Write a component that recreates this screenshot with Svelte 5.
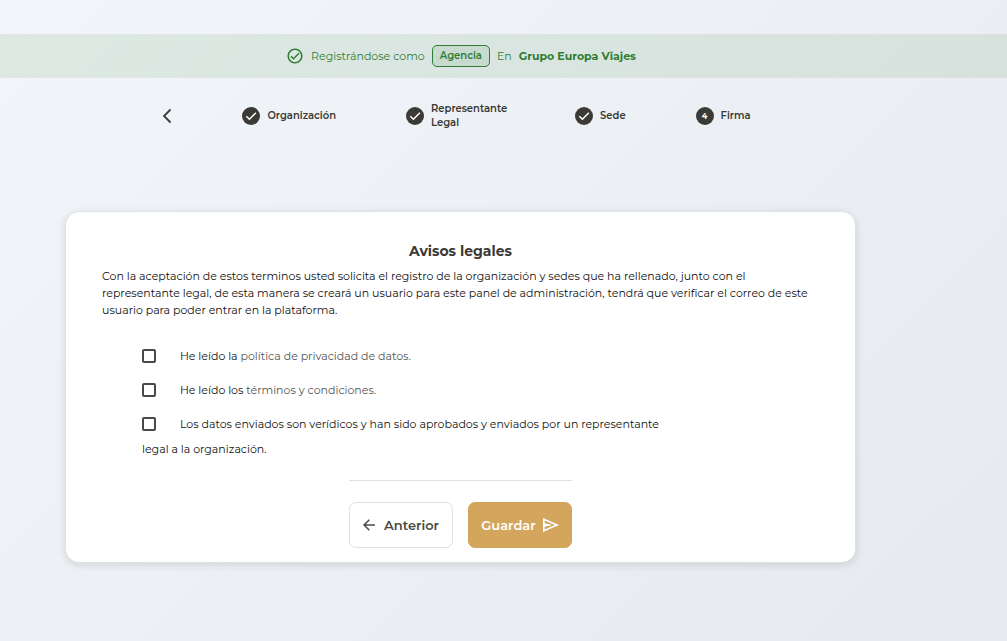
<script>
  const steps = [
    { id: 1, label: "Organización", done: true },
    { id: 2, label: "Representante Legal", done: true },
    { id: 3, label: "Sede", done: true },
    { id: 4, label: "Firma", done: false }
  ];

  let privacy = $state(false);
  let terms = $state(false);
  let truthful = $state(false);

  const save = event => {
    event.preventDefault();
  };
</script>

<main>
  <div class="banner">
    <svg viewBox="0 0 24 24" width="18" height="18">
      <path
        fill="currentColor"
        d="M12 2C6.500 2 2 6.500 2 12s4.500 10 10 10 10-4.500 10-10S17.500 2 12 2m0 18c-4.400 0-8-3.600-8-8s3.600-8 8-8 8 3.600 8 8-3.600 8-8 8m4.600-12.400L10 14.200l-2.600-2.600L6 13l4 4 8-8z" />
    </svg>
    <span>Registrándose como</span>
    <span class="badge">Agencia</span>
    <span>En</span>
    <strong>Grupo Europa Viajes</strong>
  </div>

  <nav class="steps">
    <button class="back" type="button" aria-label="Volver">
      <svg viewBox="0 0 10 16" width="10" height="16">
        <path d="M8.500 1.500 2 8l6.500 6.500" fill="none" stroke="currentColor" stroke-width="1.800" />
      </svg>
    </button>
    {#each steps as step}
      <div class="step">
        <span class="dot">
          {#if step.done}
            <svg viewBox="0 0 18 18" width="18" height="18">
              <path d="M4.300 9.200 7.400 12.300 13.900 5.800" fill="none" stroke="#fff" stroke-width="1.500" />
            </svg>
          {:else}
            {step.id}
          {/if}
        </span>
        <span class="step-label">{step.label}</span>
      </div>
    {/each}
  </nav>

  <form class="card" onsubmit={save}>
    <h1>Avisos legales</h1>
    <p class="intro">
      Con la aceptación de estos terminos usted solicita el registro de la
      organización y sedes que ha rellenado, junto con el representante legal,
      de esta manera se creará un usuario para este panel de administración,
      tendrá que verificar el correo de este usuario para poder entrar en la
      plataforma.
    </p>

    <div class="checks">
      <div class="check">
        <input id="privacy" type="checkbox" bind:checked={privacy} />
        <label for="privacy">He leído la <a href="#privacidad">política de privacidad de datos.</a></label>
      </div>
      <div class="check">
        <input id="terms" type="checkbox" bind:checked={terms} />
        <label for="terms">He leído los <a href="#terminos">términos y condiciones.</a></label>
      </div>
      <div class="check">
        <input id="truthful" type="checkbox" bind:checked={truthful} />
        <label for="truthful">Los datos enviados son verídicos y han sido aprobados y enviados por un representante legal a la organización.</label>
      </div>
    </div>

    <div class="actions">
      <button class="btn" type="button">
        <svg viewBox="0 0 12 12" width="12" height="12">
          <path d="M12 6H1.500M6.300 0.700 1 6l5.300 5.300" fill="none" stroke="currentColor" stroke-width="1.500" />
        </svg>
        Anterior
      </button>
      <button class="btn primary" type="submit">
        Guardar
        <svg viewBox="0 0 16 14" width="16" height="14">
          <path
            fill="currentColor"
            fill-rule="evenodd"
            d="M0 0 16 7 0 14zM1.600 2.400V5.300L8.500 7 1.600 8.700v2.900L12 7z" />
          <path d="M1 7h7" stroke="currentColor" stroke-width="1" />
        </svg>
      </button>
    </div>
  </form>
</main>

<style>
  :global(body) {
    margin: 0;
  }

  main {
    min-height: 100vh;
    box-sizing: border-box;
    padding-top: 34px;
    background: linear-gradient(135deg, #f2f5f9 0%, #e6eaee 100%);
    color: #111;
    font-family: Montserrat, Inter, sans-serif;
    font-size: 11px;
  }

  .banner,
  .steps {
    display: flex;
    align-items: center;
    justify-content: center;
    padding-right: 85px;
  }

  .banner {
    gap: 7px;
    height: 44px;
    background-color: rgba(46, 125, 50, 0.1);
    color: #2e7d32;
  }

  .badge {
    padding: 3px 7px;
    border: 1px solid #2e7d32;
    border-radius: 5px;
    background-color: rgba(46, 125, 50, 0.1);
    font-size: 10px;
    line-height: 14px;
    font-weight: 600;
  }

  .steps {
    gap: 70px;
    height: 75px;
    padding-right: 94px;
    color: #3b3a36;
  }

  .back {
    display: flex;
    padding: 0;
    border: 0;
    background: none;
    color: inherit;
  }

  .step {
    display: flex;
    align-items: center;
    gap: 7px;
    font-size: 10px;
    line-height: 14px;
    font-weight: 600;
  }

  .step-label {
    max-width: 74px;
  }

  .dot {
    display: flex;
    align-items: center;
    justify-content: center;
    flex: none;
    width: 18px;
    height: 18px;
    border-radius: 50%;
    background-color: #3b3a36;
    color: #fff;
    font-size: 8px;
    font-weight: 700;
  }

  .card {
    display: flex;
    flex-direction: column;
    margin: 58px 151px 0 65px;
    padding: 29px 36px 14px;
    border: 1px solid #e0e1e3;
    border-radius: 14px;
    background-color: #fff;
    box-shadow: 0 2px 8px rgba(0, 0, 0, 0.12);
  }

  h1 {
    margin: 0;
    color: #3b3a36;
    font-size: 14px;
    line-height: 20px;
    font-weight: 700;
    text-align: center;
  }

  .intro {
    margin: 7px 0 25px;
    line-height: 17px;
  }

  .checks {
    width: 565px;
    max-width: 100%;
    box-sizing: border-box;
    padding-left: 40px;
  }

  .check {
    margin-bottom: 9px;
    line-height: 25px;
  }

  input {
    appearance: none;
    width: 14px;
    height: 14px;
    margin: 0 21px 0 0;
    border: 2px solid #4a4945;
    border-radius: 2px;
    vertical-align: -3px;
  }

  input:checked {
    background-color: #4a4945;
  }

  a {
    color: #555;
    text-decoration: none;
  }

  .actions {
    display: flex;
    gap: 15px;
    align-self: center;
    margin-top: 9px;
    padding-top: 21px;
    border-top: 1px solid #e0e0e0;
  }

  .btn {
    display: flex;
    align-items: center;
    justify-content: center;
    gap: 9px;
    min-width: 104px;
    height: 46px;
    padding: 0 12px;
    border: 1px solid #e0e0e0;
    border-radius: 7px;
    background-color: #fff;
    color: #4a4945;
    font-family: inherit;
    font-size: 13px;
    font-weight: 600;
  }

  .primary {
    gap: 7px;
    border-color: #d4a55c;
    background-color: #d4a55c;
    color: #fff;
  }
</style>
